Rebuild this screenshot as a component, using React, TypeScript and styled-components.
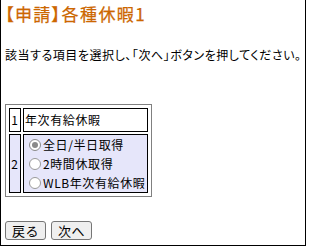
import React from "react";
import styled, { createGlobalStyle } from "styled-components";

const Global = createGlobalStyle`
  html, body { margin: 0; padding: 0; background: #fff; }
  body { font-family: "Noto Sans CJK JP", "Noto Sans", sans-serif; font-feature-settings: "palt"; color: #000; }
`;

const Frame = styled.div`
  box-sizing: border-box;
  width: 306px;
  height: 246px;
  border-left: 1px solid #000;
  border-right: 1px solid #000;
  border-bottom: 1px solid #000;
  padding: 4px 4px 0 4px;
  display: flex;
  flex-direction: column;
`;

const Title = styled.h1`
  margin: 0;
  font-size: 17px;
  line-height: 20px;
  font-weight: normal;
  color: #cc6600;
  letter-spacing: 1.4px;
  -webkit-text-stroke: 0.25px #cc6600;
`;

const Lead = styled.p`
  margin: 24px 0 0 0;
  font-size: 12px;
  line-height: 14px;
  letter-spacing: 0.55px;
  white-space: nowrap;
`;

const Table = styled.table`
  margin-top: 42px;
  border: 1px solid #808080;
  padding: 1px;
  border-spacing: 2px;
  border-collapse: separate;
  font-size: 12px;
  letter-spacing: 0.6px;
  align-self: flex-start;
`;

const Row = styled.tr<{ $shaded?: boolean }>`
  background: ${(p) => (p.$shaded ? "#e6e6fa" : "#fff")};
`;

const NumCell = styled.td`
  border: 1px solid #000;
  padding: 0 1px;
  width: 8px;
  text-align: center;
  vertical-align: middle;
  line-height: 14px;
`;

const Cell = styled.td`
  border: 1px solid #000;
  padding: 4px 1px;
  line-height: 14px;
  vertical-align: middle;
`;

const ChoiceCell = styled.td`
  border: 1px solid #000;
  padding: 0 2px 0 1px;
  vertical-align: middle;
`;

const Choice = styled.label`
  display: flex;
  align-items: center;
  height: 19px;
  line-height: 14px;
  white-space: nowrap;
`;

const Radio = styled.span<{ $checked?: boolean }>`
  box-sizing: border-box;
  width: 12px;
  height: 12px;
  border-radius: 50%;
  border: 1px solid ${(p) => (p.$checked ? "#8a8a8a" : "#9a9a9a")};
  background: #fff;
  margin: 0 2px 0 4px;
  display: inline-flex;
  align-items: center;
  justify-content: center;
  &::after {
    content: "";
    display: ${(p) => (p.$checked ? "block" : "none")};
    width: 6px;
    height: 6px;
    border-radius: 50%;
    background: #8a8a8a;
  }
`;

const Buttons = styled.div`
  margin-top: 24px;
  display: flex;
  gap: 5px;
`;

const Button = styled.button`
  box-sizing: border-box;
  height: 19px;
  padding: 0 6px;
  font-family: inherit;
  font-size: 13px;
  line-height: 15px;
  background: #efefef;
  border: 1px solid #767676;
  border-radius: 3px;
  color: #000;
  letter-spacing: 0.5px;
`;

const options = ["全日/半日取得", "2時間休取得", "WLB年次有給休暇"];

export default function App() {
  return (
    <>
      <Global />
      <Frame>
        <Title>【申請】各種休暇1</Title>
        <Lead>該当する項目を選択し、「次へ」ボタンを押してください。</Lead>
        <Table>
          <tbody>
            <Row>
              <NumCell>1</NumCell>
              <Cell>年次有給休暇</Cell>
            </Row>
            <Row $shaded>
              <NumCell>2</NumCell>
              <ChoiceCell>
                {options.map((o, i) => (
                  <Choice key={o}>
                    <Radio $checked={i === 0} />
                    {o}
                  </Choice>
                ))}
              </ChoiceCell>
            </Row>
          </tbody>
        </Table>
        <Buttons>
          <Button>戻る</Button>
          <Button>次へ</Button>
        </Buttons>
      </Frame>
    </>
  );
}
